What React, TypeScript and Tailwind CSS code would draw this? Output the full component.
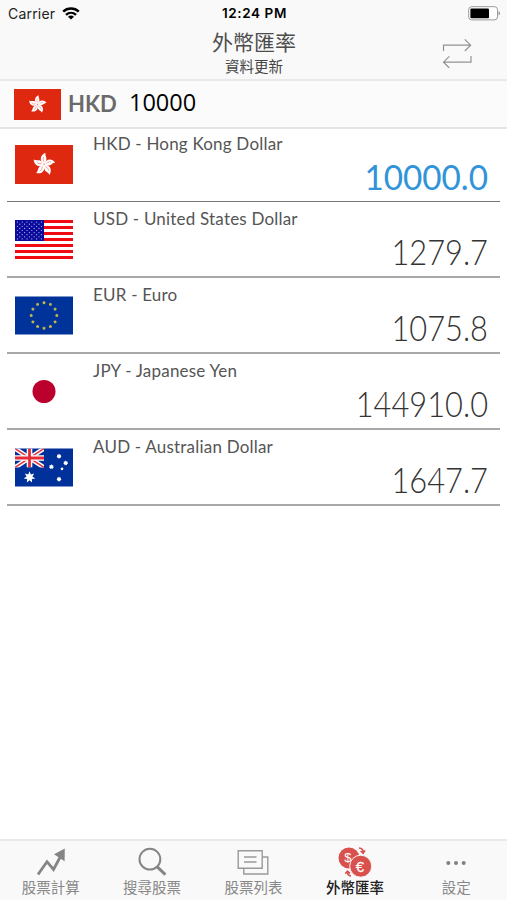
import type { ReactNode } from 'react';

interface Currency {
  code: string;
  name: string;
  amount: string;
  flag: ReactNode;
  base?: boolean;
}

interface Tab {
  label: string;
  icon: ReactNode;
  active?: boolean;
}

function starPoints(cx: number, cy: number, outer: number, inner: number, tips: number) {
  return Array.from({ length: tips * 2 }, (_, i) => {
    const r = i % 2 === 0 ? outer : inner;
    const a = (Math.PI * i) / tips - Math.PI / 2;
    return `${(cx + r * Math.cos(a)).toFixed(2)},${(cy + r * Math.sin(a)).toFixed(2)}`;
  }).join(' ');
}

function HongKongFlag({ className }: { className: string }) {
  return (
    <svg viewBox="0 0 58 38" preserveAspectRatio="none" className={className}>
      <rect width="58" height="38" fill="#de2910" />
      {[0, 72, 144, 216, 288].map((angle) => (
        <g key={angle} transform={`rotate(${angle + 2} 29 19)`}>
          <path d="M29 18.8C24.6 16.4 24 10.2 30.2 7.6C28.8 10.5 34.2 13.4 29 18.8Z" fill="#fff" />
          <path d="M29 16.5C27.8 14.5 27.8 12.8 28.6 11.5" fill="none" stroke="#de2910" strokeWidth="0.4" />
        </g>
      ))}
    </svg>
  );
}

function UnitedStatesFlag({ className }: { className: string }) {
  return (
    <svg viewBox="0 0 58 39" className={className}>
      <rect width="58" height="39" fill="#fff" />
      {[0, 6, 12, 18, 24, 30, 36].map((y) => (
        <rect key={y} y={y} width="58" height="3" fill="#f00b12" />
      ))}
      <rect width="29" height="21" fill="#0a0a9c" />
      {Array.from({ length: 9 }, (_, row) =>
        Array.from({ length: row % 2 === 0 ? 6 : 5 }, (_, col) => (
          <circle
            key={`${row}-${col}`}
            cx={2.4 + col * 4.8 + (row % 2) * 2.4}
            cy={2.1 + row * 2.1}
            r="0.6"
            fill="#b9bce6"
          />
        ))
      )}
    </svg>
  );
}

function EuroFlag({ className }: { className: string }) {
  return (
    <svg viewBox="0 0 58 38" className={className}>
      <rect width="58" height="38" fill="#003399" />
      {Array.from({ length: 12 }, (_, i) => {
        const a = (Math.PI * i) / 6;
        return (
          <polygon
            key={i}
            points={starPoints(29 + 12.8 * Math.cos(a), 19 + 12.8 * Math.sin(a), 1.9, 1.2, 5)}
            fill="#c8b84e"
          />
        );
      })}
    </svg>
  );
}

function JapanFlag({ className }: { className: string }) {
  return (
    <svg viewBox="0 0 58 38" className={className}>
      <rect width="58" height="38" fill="#fff" />
      <circle cx="29" cy="19" r="11.5" fill="#bc002d" />
    </svg>
  );
}

function AustraliaFlag({ className }: { className: string }) {
  return (
    <svg viewBox="0 0 58 38" className={className}>
      <rect width="58" height="38" fill="#00309a" />
      <svg width="29" height="19" viewBox="0 0 29 19">
        <path d="M0 0L29 19M29 0L0 19" stroke="#fff" strokeWidth="4.4" />
        <path d="M0 0L29 19M29 0L0 19" stroke="#e03a48" strokeWidth="1.5" />
        <path d="M14.5 0V19M0 9.5H29" stroke="#fff" strokeWidth="5.6" />
        <path d="M14.5 0V19M0 9.5H29" stroke="#e52b38" strokeWidth="2.8" />
      </svg>
      <polygon points={starPoints(14.5, 28.7, 6, 3, 7)} fill="#fff" />
      <polygon points={starPoints(44, 7.8, 2.5, 1.8, 7)} fill="#fff" />
      <polygon points={starPoints(50.7, 14.5, 2.5, 1.8, 7)} fill="#fff" />
      <polygon points={starPoints(36.4, 18.3, 2.5, 1.8, 7)} fill="#fff" />
      <polygon points={starPoints(47, 20.3, 1.7, 1.1, 5)} fill="#fff" />
      <polygon points={starPoints(44, 30.7, 2.5, 1.8, 7)} fill="#fff" />
    </svg>
  );
}

function WifiIcon() {
  return (
    <svg viewBox="0 0 18 13" className="h-[13px] w-[18px]" fill="none" stroke="#000" strokeWidth="2.4">
      <path d="M1.2 4.7C5.5 0.5 12.5 0.5 16.8 4.7" />
      <path d="M4 7.9C6.9 5.2 11.1 5.2 14 7.9" />
      <path d="M9 12.6L6 9.7C7.8 8.2 10.2 8.2 12 9.7Z" fill="#000" stroke="none" />
    </svg>
  );
}

function BatteryIcon() {
  return (
    <svg viewBox="0 0 33 15" className="h-[15px] w-[33px]">
      <rect x="0.7" y="0.7" width="28.8" height="13.2" rx="3" fill="#fff" stroke="#999" strokeWidth="1" />
      <rect x="2.4" y="2.4" width="18.6" height="9.8" rx="1" fill="#000" />
      <path d="M30.6 5.2C32.4 5.7 32.4 8.8 30.6 9.3Z" fill="#888" />
    </svg>
  );
}

function SwapIcon() {
  return (
    <svg viewBox="0 0 30 30" className="h-[30px] w-[30px]" fill="none" stroke="#929292" strokeWidth="1.2">
      <path d="M1.5 13V7.2H28.5M22.8 1.4L28.6 7.2L22.8 13" />
      <path d="M29 18V24.2H1.6M7.3 18.4L1.5 24.2L7.3 30" />
    </svg>
  );
}

function ChartIcon() {
  return (
    <svg viewBox="0 0 30 30" className="h-[30px] w-[30px]">
      <path d="M2 27.5L11 14.7L17.5 22.5L25 8.5" fill="none" stroke="#858585" strokeWidth="2.8" />
      <path d="M28.8 1.5L18 7.3L28.6 14.2Z" fill="#858585" />
    </svg>
  );
}

function SearchIcon() {
  return (
    <svg viewBox="0 0 30 30" className="h-[30px] w-[30px]" fill="none" stroke="#858585">
      <circle cx="12.9" cy="12.2" r="10.4" strokeWidth="2" />
      <path d="M20.2 19.9L28.4 27.6" strokeWidth="3" />
    </svg>
  );
}

function ListIcon() {
  return (
    <svg viewBox="0 0 32 30" className="h-[30px] w-[32px]" fill="none" stroke="#999" strokeWidth="1.4">
      <path d="M1.2 3.7H25.2V21.3H1.2Z" />
      <path d="M6.8 21.3V27H30.8V10H25.2" />
      <path d="M7 10H19.5M7 15H19.5" />
    </svg>
  );
}

function ExchangeIcon() {
  return (
    <svg viewBox="0 0 34 32" className="h-[32px] w-[34px]">
      <circle cx="11" cy="12" r="10.5" fill="#d9514d" />
      <text x="9.8" y="16.2" textAnchor="middle" fontSize="13" fontFamily="Liberation Sans, sans-serif" fill="#fff">
        $
      </text>
      <circle cx="22.7" cy="20.2" r="11" fill="#d9514d" stroke="#f9f9f9" strokeWidth="1" />
      <text x="22" y="25.6" textAnchor="middle" fontSize="15" fontFamily="Liberation Sans, sans-serif" stroke="#fff" strokeWidth="0.3" fill="#fff">
        €
      </text>
      <g fill="none" stroke="#d9514d" strokeWidth="1.6">
        <path d="M21 2C24 2.2 25.3 4 25.2 6.8M22.6 5L25.2 7.2L27 4.3" />
        <path d="M13 30C10.2 29.7 9.3 28 9.4 25.3M7.3 27.8L9.4 25.2L12 27.3" />
      </g>
    </svg>
  );
}

function MoreIcon() {
  return (
    <svg viewBox="0 0 30 30" className="h-[30px] w-[30px]" fill="#808080">
      <circle cx="7.3" cy="16" r="2" />
      <circle cx="15" cy="16" r="2" />
      <circle cx="22.7" cy="16" r="2" />
    </svg>
  );
}

const flagSize = 'h-[39px] w-[58px]';

const currencies: Currency[] = [
  { code: 'HKD', name: 'Hong Kong Dollar', amount: '10000.0', flag: <HongKongFlag className={flagSize} />, base: true },
  { code: 'USD', name: 'United States Dollar', amount: '1279.7', flag: <UnitedStatesFlag className={flagSize} /> },
  { code: 'EUR', name: 'Euro', amount: '1075.8', flag: <EuroFlag className={flagSize} /> },
  { code: 'JPY', name: 'Japanese Yen', amount: '144910.0', flag: <JapanFlag className={flagSize} /> },
  { code: 'AUD', name: 'Australian Dollar', amount: '1647.7', flag: <AustraliaFlag className={flagSize} /> },
];

const tabs: Tab[] = [
  { label: '股票計算', icon: <ChartIcon /> },
  { label: '搜尋股票', icon: <SearchIcon /> },
  { label: '股票列表', icon: <ListIcon /> },
  { label: '外幣匯率', icon: <ExchangeIcon />, active: true },
  { label: '設定', icon: <MoreIcon /> },
];

export default function App() {
  return (
    <div className="flex h-[900px] w-[507px] flex-col overflow-hidden bg-white font-['Lato','Noto_Sans_CJK_TC',sans-serif] text-[#555]">
      <header className="h-[81px] shrink-0 border-b-2 border-[#e9e9e9] bg-[#f9f9f9]">
        <div className="grid h-[27px] grid-cols-3 items-center pr-1.5 pl-2 font-['Inter',sans-serif] text-[14px] text-black">
          <div className="flex items-center gap-[7px] tracking-[0.2px] text-[#222]">
            Carrier
            <WifiIcon />
          </div>
          <div className="text-center text-[13.5px] font-semibold tracking-[0.6px]">12:24 PM</div>
          <div className="flex justify-end">
            <BatteryIcon />
          </div>
        </div>
        <div className="grid grid-cols-[80px_1fr_80px]">
          <div className="col-start-2 pl-px text-center">
            <h1 className="text-[21px] leading-[29px] text-[#4c4c4c]">外幣匯率</h1>
            <p className="text-[14.5px] leading-[22px] text-[#444]">資料更新</p>
          </div>
          <button className="flex h-[52px] items-center pl-[15px]" aria-label="Swap">
            <SwapIcon />
          </button>
        </div>
      </header>

      <div className="flex h-[48px] shrink-0 items-center border-b-2 border-[#e4e4e4] bg-[#fbfbfb] pl-[14px]">
        <HongKongFlag className="h-[31px] w-[47px]" />
        <span className="ml-[7px] w-[49px] text-[22px] leading-[30px] font-bold text-[#6a6a6a]">HKD</span>
        <span className="ml-[12px] pb-[4px] font-['Open_Sans'] text-[23.5px] leading-[30px] text-black">10000</span>
      </div>

      <main className="-mt-[2px] flex-1 px-[7px]">
        {currencies.map((currency) => (
          <div
            key={currency.code}
            className={
              currency.base
                ? 'flex h-[75.4px] border-b border-[#777] pr-3 pl-[8px]'
                : 'flex h-[75.8px] border-b-2 border-[#a8a8a8] pr-3 pl-[8px]'
            }
          >
            <div className="pt-[18px]">{currency.flag}</div>
            <div className="ml-5 flex flex-1 flex-col">
              <span className="pt-[6px] text-[17px] leading-[22px] tracking-[0.2px]">
                {currency.code} - {currency.name}
              </span>
              <span
                className={
                  currency.base
                    ? 'origin-right scale-x-[0.95] text-right text-[35px] leading-[43px] text-[#3193d8]'
                    : 'origin-right scale-x-[0.88] text-right text-[35px] leading-[43px] font-light text-[#333]'
                }
              >
                {currency.amount}
              </span>
            </div>
          </div>
        ))}
      </main>

      <nav className="grid h-[61px] shrink-0 grid-cols-5 border-t-2 border-[#e9e9e9] bg-[#f9f9f9]">
        {tabs.map((tab) => (
          <button key={tab.label} className="flex flex-col items-center pt-1.5">
            <span className="flex h-[30px] items-center">{tab.icon}</span>
            <span
              className={
                tab.active
                  ? 'text-[14.5px] leading-[22px] font-medium text-[#202020]'
                  : 'text-[14.5px] leading-[22px] text-[#888]'
              }
            >
              {tab.label}
            </span>
          </button>
        ))}
      </nav>
    </div>
  );
}
